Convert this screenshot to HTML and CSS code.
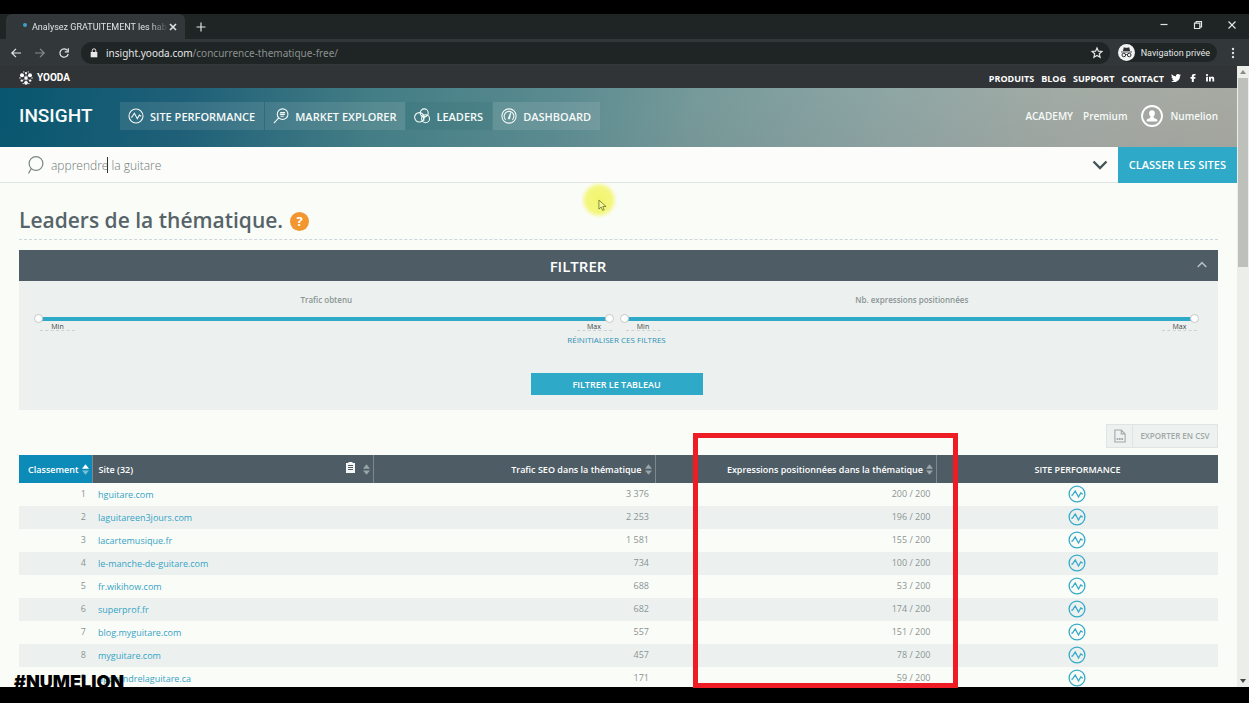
FILE: index.html
```html
<!DOCTYPE html>
<html lang="fr">
<head>
<meta charset="utf-8">
<title>Analysez GRATUITEMENT les habitudes</title>
<link rel="stylesheet" href="styles.css">
</head>
<body>
<svg class="defs" aria-hidden="true">
  <symbol id="perf" viewBox="0 0 18 18"><circle cx="9" cy="9" r="7.9"/><path d="M3.3 10.2h1.2L7.2 6l3.3 6 2.3-4 2 1.2"/></symbol>
  <symbol id="lens" viewBox="0 0 18 18"><circle cx="10" cy="7.500" r="6.900"/><path d="M5.200 12.600 2.500 17.500"/></symbol>
  <symbol id="sort" viewBox="0 0 8 12"><path class="up" d="M4 0 8 5H0z"/><path class="down" d="M4 12 0 7h8z"/></symbol>
  <symbol id="sort-asc" viewBox="0 0 8 12"><path fill="#fff" d="M4 0 8 5H0z"/><path d="M4 12 0 7h8z"/></symbol>
</svg>

<div class="window">
  <div class="tabstrip">
    <div class="tab">
      <span class="tab-dot"></span>
      <span class="tab-title">Analysez GRATUITEMENT les hab</span>
      <button class="bare" aria-label="Fermer l'onglet"><svg class="i8 line bold" viewBox="0 0 8 8"><path d="m1 1 6 6M7 1 1 7"/></svg></button>
    </div>
    <button class="bare new-tab" aria-label="Nouvel onglet"><svg class="i10 line" viewBox="0 0 10 10"><path d="M5 .5v9M.5 5h9"/></svg></button>
    <div class="window-controls">
      <button class="bare" aria-label="Réduire"><svg class="i8 line" viewBox="0 0 8 8"><path d="M.5 3.500h7"/></svg></button>
      <button class="bare" aria-label="Agrandir"><svg class="i8 line" viewBox="0 0 8 8"><path d="M.5 2.2h5.3v5.3H.5zM2.2 2V.5h5.3v5.3H6"/></svg></button>
      <button class="bare" aria-label="Fermer"><svg class="i8 line" viewBox="0 0 8 8"><path d="m.5.5 7 7M7.500.5l-7 7"/></svg></button>
    </div>
  </div>

  <div class="toolbar">
    <button class="bare" aria-label="Précédent"><svg class="i10 line" viewBox="0 0 10 10"><path d="M10 5H1M5 .8.8 5 5 9.200"/></svg></button>
    <button class="bare dim" aria-label="Suivant"><svg class="i10 line" viewBox="0 0 10 10"><path d="M0 5h9M5 .8 9.200 5 5 9.200"/></svg></button>
    <button class="bare" aria-label="Actualiser"><svg class="i10 line" viewBox="0 0 10 10"><path d="M8.500 2.500A4.200 4.200 0 1 0 9.200 6M9.300.3v3.500H5.800"/></svg></button>
    <div class="address">
      <svg class="lock" viewBox="0 0 8 10"><path d="M.7 4h6.600v5.300H.7z" fill="#e8eaea"/><path d="M2.200 4V2.600a1.800 1.800 0 0 1 3.600 0V4" fill="none" stroke="#e8eaea"/></svg>
      <span class="url">insight.yooda.com<span class="path">/concurrence-thematique-free/</span></span>
      <button class="bare" aria-label="Ajouter aux favoris"><svg class="i12 line" viewBox="0 0 12 12"><path d="m6 1 1.400 3.200 3.500.3-2.600 2.300.8 3.400L6 8.400l-3.100 1.800.8-3.400L1.100 4.500l3.500-.3z"/></svg></button>
    </div>
    <div class="private">
      <svg class="i17" viewBox="0 0 17 17"><circle cx="8.500" cy="8.500" r="8.500" fill="#f1f3f3"/><g fill="#2b3033"><path d="m5.800 3.300 1.500.4h2.400l1.500-.4.9 3.700H4.900z"/><path d="M3 7.600h11v.8H3z"/></g><g fill="none" stroke="#2b3033"><circle cx="5.800" cy="11" r="1.800"/><circle cx="11.200" cy="11" r="1.800"/><path d="M7.600 10.800q.9-.6 1.800 0"/></g></svg>
      <span>Navigation privée</span>
    </div>
    <button class="bare" aria-label="Menu"><svg class="dots" viewBox="0 0 4 12"><g fill="#e0e2e2"><circle cx="2" cy="2" r="1.200"/><circle cx="2" cy="6" r="1.200"/><circle cx="2" cy="10" r="1.200"/></g></svg></button>
  </div>

  <div class="viewport">
    <div class="page">
      <header class="topbar">
        <a class="brand" href="#">
          <svg class="i14" viewBox="0 0 14 14"><g stroke="#d9dcdc" stroke-width=".6"><path d="M7 7 3 4M7 7l4-3M7 7v5M7 7 3 10M7 7l4 3M7 7V2"/></g><g fill="#fff"><circle cx="7" cy="7" r="1.700"/><circle cx="3" cy="4.200" r="2"/><circle cx="11" cy="4.200" r="2"/><circle cx="7" cy="11.800" r="1.900"/><circle cx="2.800" cy="9.600" r="1.200"/><circle cx="11.200" cy="9.600" r="1.200"/><circle cx="7" cy="2" r="1.100"/><circle cx="1" cy="7" r=".7"/><circle cx="13" cy="7" r=".7"/><circle cx="4.200" cy="12.600" r=".7"/><circle cx="9.900" cy="12.600" r=".7"/><circle cx="4.800" cy=".9" r=".6"/><circle cx="9.200" cy=".9" r=".6"/></g></svg>
          <span>YOODA</span>
        </a>
        <nav class="toplinks">
          <a href="#">PRODUITS</a><a href="#">BLOG</a><a href="#">SUPPORT</a><a href="#">CONTACT</a>
          <a class="social" href="#" aria-label="Twitter"><svg class="i10" viewBox="0 0 24 24"><path fill="#fff" d="M24 4.600a10 10 0 0 1-2.800.8 5 5 0 0 0 2.100-2.700 10 10 0 0 1-3.100 1.200 4.900 4.900 0 0 0-8.400 4.500A14 14 0 0 1 1.700 3.200a4.900 4.900 0 0 0 1.500 6.500 5 5 0 0 1-2.200-.6 4.900 4.900 0 0 0 3.900 4.900 5 5 0 0 1-2.200.1 4.900 4.900 0 0 0 4.600 3.400A9.900 9.900 0 0 1 0 19.500a14 14 0 0 0 21.500-12.400A10 10 0 0 0 24 4.600z"/></svg></a>
          <a class="social" href="#" aria-label="Facebook"><svg class="i10" viewBox="0 0 10 10"><path fill="#fff" d="M3.800 9V5.700H2.500V4.100h1.300V3C3.800 1.600 4.600.9 6 .9h1.500v1.500h-.9c-.6 0-.8.3-.8.8v.9h1.700l-.3 1.600H5.800V9z"/></svg></a>
          <a class="social" href="#" aria-label="LinkedIn"><svg class="i10" viewBox="0 0 10 10"><g fill="#fff"><circle cx="2" cy="2" r="1.100"/><path d="M1.100 3.700h1.800V8.500H1.100zM4 3.700h1.700v.7c.9-1.300 3.500-1.100 3.500 1.400v2.700H7.400V6.200c0-1.400-1.600-1.300-1.600 0v2.300H4z"/></g></svg></a>
        </nav>
      </header>

      <div class="hero">
        <a class="product" href="#">INSIGHT</a>
        <nav class="mainnav">
          <a href="#"><svg class="i16 line"><use href="#perf"/></svg>SITE PERFORMANCE</a>
          <a href="#"><svg class="i16 line" viewBox="0 0 18 18"><circle cx="10.800" cy="7" r="6"/><path d="M6.500 11.200 1 17M8 5.200h5.600M7.700 7.200h5.600M8.500 9.200h3.500"/></svg>MARKET EXPLORER</a>
          <a class="current" href="#"><svg class="i16 line" viewBox="0 0 18 18"><circle cx="6" cy="10.500" r="5.300"/><circle cx="11.500" cy="5.500" r="4.500"/><circle cx="13" cy="12" r="4.500"/><path d="m8 8 3 3 4-3M11 11v4"/></svg>LEADERS</a>
          <a href="#"><svg class="i16 line" viewBox="0 0 18 18"><circle cx="9" cy="9" r="8"/><path d="M5.200 13.300A5.500 5.500 0 1 1 12.800 13.300M8 12.500l2.800-7M9.500 12.500l1.300-7"/></svg>DASHBOARD</a>
        </nav>
        <nav class="account">
          <a href="#">ACADEMY</a><a href="#">Premium</a>
          <a class="user" href="#"><svg class="i22" viewBox="0 0 22 22"><circle cx="11" cy="11" r="10" fill="none" stroke="#fff" stroke-width="1.800"/><path fill="#fff" d="M11 5.300c2 0 3 1.400 2.900 3.300-.1 1.300-.8 2.300-1.300 2.900v1.300l3.200 1.500c.5.300.6.900.6 2.100H5.600c0-1.200.1-1.800.6-2.100l3.200-1.500v-1.300c-.5-.6-1.200-1.600-1.300-2.900C8 6.700 9 5.300 11 5.300z"/></svg>Numelion</a>
        </nav>
      </div>

      <form class="search">
        <svg class="search-icon line"><use href="#lens"/></svg>
        <div class="field"><input type="text" aria-label="Thématique" value="apprendre la guitare"><span class="caret"></span></div>
        <button class="bare expand" type="button" aria-label="Options"><svg class="chev" viewBox="0 0 16 10"><path d="m1.500 1.500 6.500 6.500 6.500-6.500"/></svg></button>
        <button class="submit" type="button">CLASSER LES SITES</button>
      </form>

      <main class="content">
        <div class="heading">
          <h1>Leaders de la thématique.</h1>
          <button class="help" aria-label="Aide">?</button>
        </div>

        <section class="filter">
          <div class="filter-head">
            <h2>FILTRER</h2>
            <button class="bare" aria-label="Replier"><svg class="i10 line bold" viewBox="0 0 10 10"><path d="m.7 6 4.300-4.300L9.300 6"/></svg></button>
          </div>
          <div class="filter-body">
            <div class="ranges">
              <fieldset>
                <legend>Trafic obtenu</legend>
                <div class="slider">
                  <input type="range" aria-label="Trafic minimum" value="0"><input type="range" aria-label="Trafic maximum" value="100">
                </div>
                <div class="bounds"><input type="text" aria-label="Trafic min" value="Min"><input type="text" aria-label="Trafic max" value="Max"></div>
              </fieldset>
              <fieldset>
                <legend>Nb. expressions positionnées</legend>
                <div class="slider">
                  <input type="range" aria-label="Expressions minimum" value="0"><input type="range" aria-label="Expressions maximum" value="100">
                </div>
                <div class="bounds"><input type="text" aria-label="Expressions min" value="Min"><input type="text" aria-label="Expressions max" value="Max"></div>
              </fieldset>
            </div>
            <a class="reset" href="#">RÉINITIALISER CES FILTRES</a>
            <button class="apply">FILTRER LE TABLEAU</button>
          </div>
        </section>

        <button class="export">
          <span class="export-icon"><svg class="doc" viewBox="0 0 14 16"><g fill="none" stroke="#a4abaa" stroke-width="1.300"><path d="M1 1h7.500L13 5.500V15H1zM8.500 1v4.500H13"/></g><path stroke="#a4abaa" stroke-width="2.500" stroke-dasharray="2 .8" d="M3 11.500h8"/></svg></span>
          <span class="export-label">EXPORTER EN CSV</span>
        </button>

        <table>
          <thead>
            <tr>
              <th class="rank sorted"><span>Classement <svg class="sort"><use href="#sort-asc"/></svg></span></th>
              <th class="site"><span>Site (32)<svg class="clip" viewBox="0 0 9 11"><path fill="#f4f6f6" d="M0 1h2.500V0h4v1H9v10H0z"/><path stroke="#4d5c65" d="M2 3.500h5M2 5.500h5M2 7.500h5"/></svg><svg class="sort"><use href="#sort"/></svg></span></th>
              <th class="num"><span>Trafic SEO dans la thématique <svg class="sort"><use href="#sort"/></svg></span></th>
              <th class="num"><span>Expressions positionnées dans la thématique <svg class="sort"><use href="#sort"/></svg></span></th>
              <th class="perf">SITE PERFORMANCE</th>
            </tr>
          </thead>
          <tbody>
            <tr><td>1</td><td><a href="#">hguitare.com</a></td><td>3 376</td><td>200 / 200</td><td><a href="#" aria-label="Performance"><svg class="i18"><use href="#perf"/></svg></a></td></tr>
            <tr><td>2</td><td><a href="#">laguitareen3jours.com</a></td><td>2 253</td><td>196 / 200</td><td><a href="#" aria-label="Performance"><svg class="i18"><use href="#perf"/></svg></a></td></tr>
            <tr><td>3</td><td><a href="#">lacartemusique.fr</a></td><td>1 581</td><td>155 / 200</td><td><a href="#" aria-label="Performance"><svg class="i18"><use href="#perf"/></svg></a></td></tr>
            <tr><td>4</td><td><a href="#">le-manche-de-guitare.com</a></td><td>734</td><td>100 / 200</td><td><a href="#" aria-label="Performance"><svg class="i18"><use href="#perf"/></svg></a></td></tr>
            <tr><td>5</td><td><a href="#">fr.wikihow.com</a></td><td>688</td><td>53 / 200</td><td><a href="#" aria-label="Performance"><svg class="i18"><use href="#perf"/></svg></a></td></tr>
            <tr><td>6</td><td><a href="#">superprof.fr</a></td><td>682</td><td>174 / 200</td><td><a href="#" aria-label="Performance"><svg class="i18"><use href="#perf"/></svg></a></td></tr>
            <tr><td>7</td><td><a href="#">blog.myguitare.com</a></td><td>557</td><td>151 / 200</td><td><a href="#" aria-label="Performance"><svg class="i18"><use href="#perf"/></svg></a></td></tr>
            <tr><td>8</td><td><a href="#">myguitare.com</a></td><td>457</td><td>78 / 200</td><td><a href="#" aria-label="Performance"><svg class="i18"><use href="#perf"/></svg></a></td></tr>
            <tr><td>9</td><td><a href="#">apprendrelaguitare.ca</a></td><td>171</td><td>59 / 200</td><td><a href="#" aria-label="Performance"><svg class="i18"><use href="#perf"/></svg></a></td></tr>
          </tbody>
        </table>
      </main>
    </div>
    <div class="scrollbar" aria-hidden="true">
      <svg class="arrow" viewBox="0 0 8 6"><path fill="#888b88" d="M4 1 7 5H1z"/></svg>
      <div class="thumb"></div>
      <svg class="arrow" viewBox="0 0 8 6"><path fill="#444" d="M4 5 1 1h6z"/></svg>
    </div>
    <div class="watermark">#NUMELION</div>
  </div>
  <div class="highlight"></div>
  <div class="pointer"><svg viewBox="0 0 10 14"><path fill="#f6f99a" stroke="#6f7330" stroke-width=".9" d="M1 1v10l2.500-2.300 1.600 3.800 1.800-.8-1.600-3.600H9z"/></svg></div>
</div>
</body>
</html>
```
FILE: styles.css
```css
* { box-sizing: border-box; }
body { margin: 0; background: #000; font-family: "Open Sans", sans-serif; font-size: 9px; color: #8b9493; }
a { color: inherit; text-decoration: none; }
button, input { font: inherit; color: inherit; margin: 0; }
svg { display: block; flex: none; overflow: visible; }
h1, h2 { margin: 0; font-weight: 600; }

.defs { position: absolute; width: 0; height: 0; }
.bare { display: flex; align-items: center; justify-content: center; padding: 0; border: 0; background: none; }
.line { fill: none; stroke: currentColor; stroke-width: 1.2; }
.bold { stroke-width: 1.6; }
.i8 { width: 8px; height: 8px; }
.i10 { width: 10px; height: 10px; }
.i12 { width: 12px; height: 12px; }
.i14 { width: 14px; height: 14px; }
.i16 { width: 16px; height: 16px; }
.i17 { width: 17px; height: 17px; }
.i18 { width: 18px; height: 18px; }
.i22 { width: 22px; height: 22px; }

/* Browser frame */
.window { position: relative; display: flex; flex-direction: column; height: 100vh; padding: 14px 0 16px; overflow: hidden; }
.tabstrip { display: flex; align-items: stretch; flex: none; height: 25px; padding-left: 6px; background: #1f2424; color: #dfe3e3; }
.tab { display: flex; align-items: center; width: 179px; padding: 0 8px 0 17px; border-radius: 6px 6px 0 0; background: #32373a; }
.tab-dot { width: 4px; height: 4px; margin: 0 5px 3px 0; border-radius: 50%; background: #3f9fca; }
.tab-title { flex: 1; overflow: hidden; white-space: nowrap; font-family: "Roboto", sans-serif; mask-image: linear-gradient(90deg, #000 85%, transparent); }
.new-tab { width: 32px; }
.window-controls { display: flex; gap: 26px; margin-left: auto; padding: 0 13px 3px 0; }
.toolbar { display: flex; align-items: center; flex: none; gap: 14px; height: 27px; padding: 0 14px 0 11px; background: #32373a; color: #e4e7e7; font-family: "Noto Sans", sans-serif; }
.dim { color: #878c8d; }
.address { display: flex; align-items: center; flex: 1; gap: 8px; height: 22px; margin-left: -2px; padding: 0 7px 0 9px; border-radius: 11px; background: #1f2424; }
.lock { width: 8px; height: 10px; }
.url { flex: 1; font-size: 10px; white-space: nowrap; }
.path { color: #8b9190; }
.private { display: flex; align-items: center; gap: 6px; height: 19px; margin-left: -6px; padding-right: 7px; border-radius: 10px; background: #1f2424; font-family: "Roboto", sans-serif; }
.dots { width: 4px; height: 12px; }

/* Site */
.viewport { position: relative; display: flex; flex: 1; min-height: 0; overflow: hidden; background: #fafcf8; }
.page { flex: 1; min-width: 0; overflow: hidden; }
.scrollbar { display: flex; flex-direction: column; flex: none; align-items: center; width: 12px; padding: 3px 0; background: #eceeea; }
.arrow { width: 8px; height: 6px; }
.thumb { width: 10px; height: 189px; margin: 3px 0 auto; background: #bec0bb; }
.topbar { display: flex; justify-content: space-between; align-items: center; height: 22px; padding: 2px 22px 0 19px; background: #303436; color: #fff; }
.brand { display: flex; align-items: center; gap: 4px; font: 700 10px/14px "Roboto", sans-serif; }
.toplinks { display: flex; align-items: center; gap: 7px; font-size: 9px; font-weight: 700; }
.hero {
  display: flex; align-items: center; height: 59px; padding: 0 19px 3px; color: #f6faf8; font-size: 11px; font-weight: 600;
  background: linear-gradient(170deg, transparent 50%, rgba(110, 90, 100, .16)), linear-gradient(97deg, #08566f 0, #1f6078 15%, #437d85 30%, #5a8b90 45%, #769999 56%, #8fa8a6 72%, #a6b0a9 86%, #adb2a8 100%);
}
.product { width: 101px; font: 500 19px/24px "Roboto", sans-serif; }
.mainnav { display: flex; gap: 1px; }
.mainnav a { display: flex; align-items: center; gap: 6px; height: 28px; padding: 0 9px 0 8px; background: rgba(255, 255, 255, .1); }
.mainnav a.current { background: rgba(20, 90, 90, .1); }
.account { display: flex; align-items: center; gap: 10px; margin-left: auto; font-size: 10px; }
.user { display: flex; align-items: center; gap: 7px; margin-left: 4px; }
.search { display: flex; align-items: stretch; height: 36px; border-bottom: 1px solid #e0e4e1; background: #fcfdfb; }
.search-icon { align-self: center; width: 18px; height: 18px; margin: 0 7px 0 26px; color: #7b8583; }
.field { position: relative; flex: 1; display: flex; }
.field input { width: 100%; padding: 1px 0 0; border: 0; outline: 0; background: none; font-size: 12px; font-weight: 300; color: #6d7776; }
.caret { position: absolute; left: 56px; top: 10px; width: 1px; height: 16px; background: #333; }
.expand { width: 35px; }
.chev { width: 16px; height: 10px; fill: none; stroke: #45535b; stroke-width: 2.4; }
.submit { margin-bottom: -1px; padding: 0 11px 2px; border: 0; background: #2fa9c8; color: #fff; font-size: 11px; font-weight: 600; }
.content { padding: 0 19px; }
.heading { display: flex; align-items: center; gap: 7px; height: 57px; padding-top: 17px; border-bottom: 1px dashed #cdd6d8; }
h1 { font-size: 21px; line-height: 28px; color: #566469; }
.help { width: 19px; height: 19px; margin-top: 3px; padding: 0; border: 0; border-radius: 50%; background: #f2962f; color: #fff; font-size: 13px; font-weight: 700; line-height: 19px; }

.filter { margin-top: 10px; background: #ecf1f0; }
.filter-head { display: flex; align-items: center; height: 31px; background: #4d5c65; color: #fff; text-align: center; }
.filter-head h2 { flex: 1; font-size: 15px; line-height: 20px; }
.filter-head button { width: 81px; padding-right: 11px; justify-content: flex-end; color: #b5bdc0; }
.filter-body { display: flex; flex-direction: column; align-items: center; height: 129px; padding: 13px 19px 0 15px; }
.ranges { display: grid; grid-template-columns: 1fr 1fr; gap: 6px; align-self: stretch; }
fieldset { min-width: 0; margin: 0; padding: 0; border: 0; }
legend { width: 100%; padding: 0 0 0 5px; font-weight: 600; font-size: 8px; line-height: 12px; text-align: center; }
.slider { display: grid; margin-top: 8px; height: 9px; background: linear-gradient(#2fa9c8, #2fa9c8) center / calc(100% - 8px) 4px no-repeat; }
.slider input { grid-area: 1 / 1; width: 100%; height: 9px; appearance: none; background: none; pointer-events: none; }
.slider input::-webkit-slider-thumb { appearance: none; width: 9px; height: 9px; border: 1px solid #c3c9c8; border-radius: 50%; background: #fff; pointer-events: auto; }
.bounds { display: flex; justify-content: space-between; padding: 0 2px 0 6px; }
.bounds input { width: 35px; height: 8px; padding: 0; border: 0; border-bottom: 1px dashed #ccd3d1; background: none; color: #3e4545; font-size: 7px; line-height: 7px; text-align: center; }
.reset { margin-top: 3px; font-size: 8px; line-height: 12px; color: #2f8fb0; }
.apply { width: 172px; height: 22px; margin: 27px 0 0; padding: 0; border: 0; background: #2fa9c8; color: #fff; font-weight: 600; }

.export { display: flex; width: 112px; height: 24px; margin: 14px 0 7px auto; padding: 0; border: 1px solid #e0e5e3; background: #edf1ef; color: #a0a8a7; font-size: 8px; font-weight: 600; }
.export-icon { display: flex; align-items: center; justify-content: center; width: 26px; height: 100%; border-right: 1px solid #e0e5e3; }
.doc { width: 12px; height: 14px; }
.export-label { flex: 1; align-self: center; padding-bottom: 1px; white-space: nowrap; }

table { width: 100%; border-collapse: collapse; table-layout: fixed; }
th { height: 28px; padding: 0 6px; border-right: 1px solid #7d888e; background: #4d5c65; color: #fff; font-weight: 600; text-align: left; white-space: nowrap; }
th:last-child { border-right: 0; text-align: center; }
th span { display: flex; align-items: center; gap: 3px; }
.rank { width: 73px; }
.rank, .num, .site { padding-right: 3px; }
.rank span, .num span { justify-content: flex-end; }
.sorted { background: #0d8bb8; }
.sort { width: 7px; height: 11px; fill: #9aa5aa; }
.sorted .sort { fill: #7dbfd9; }
.clip { width: 9px; height: 11px; margin: 0 5px 4px auto; }
td { height: 23px; padding: 0 6px 2px; text-align: right; line-height: 12px; }
td:nth-child(2) { padding: 0 6px; text-align: left; color: #35a3c4; }
td:last-child { text-align: center; }
td svg { margin: 0 auto; fill: none; stroke: #35a9c8; stroke-width: 1.3; }
tbody tr:nth-child(even) { background: #ecf1f0; }

/* Screencast overlays */
.highlight { position: absolute; left: 693px; top: 433px; width: 265px; bottom: 15px; border: 5px solid #ee1c25; }
.watermark { position: absolute; left: 14px; bottom: -5px; color: #000; font: 900 18px/20px "Inter", sans-serif; }
.pointer { position: absolute; left: 581px; top: 182px; display: flex; width: 36px; height: 36px; padding: 17px 0 0 17px; background: radial-gradient(circle, #f1f56d 0, #f4f77f 50%, rgba(246, 249, 160, 0) 72%); }
.pointer svg { width: 9px; height: 13px; }
```
